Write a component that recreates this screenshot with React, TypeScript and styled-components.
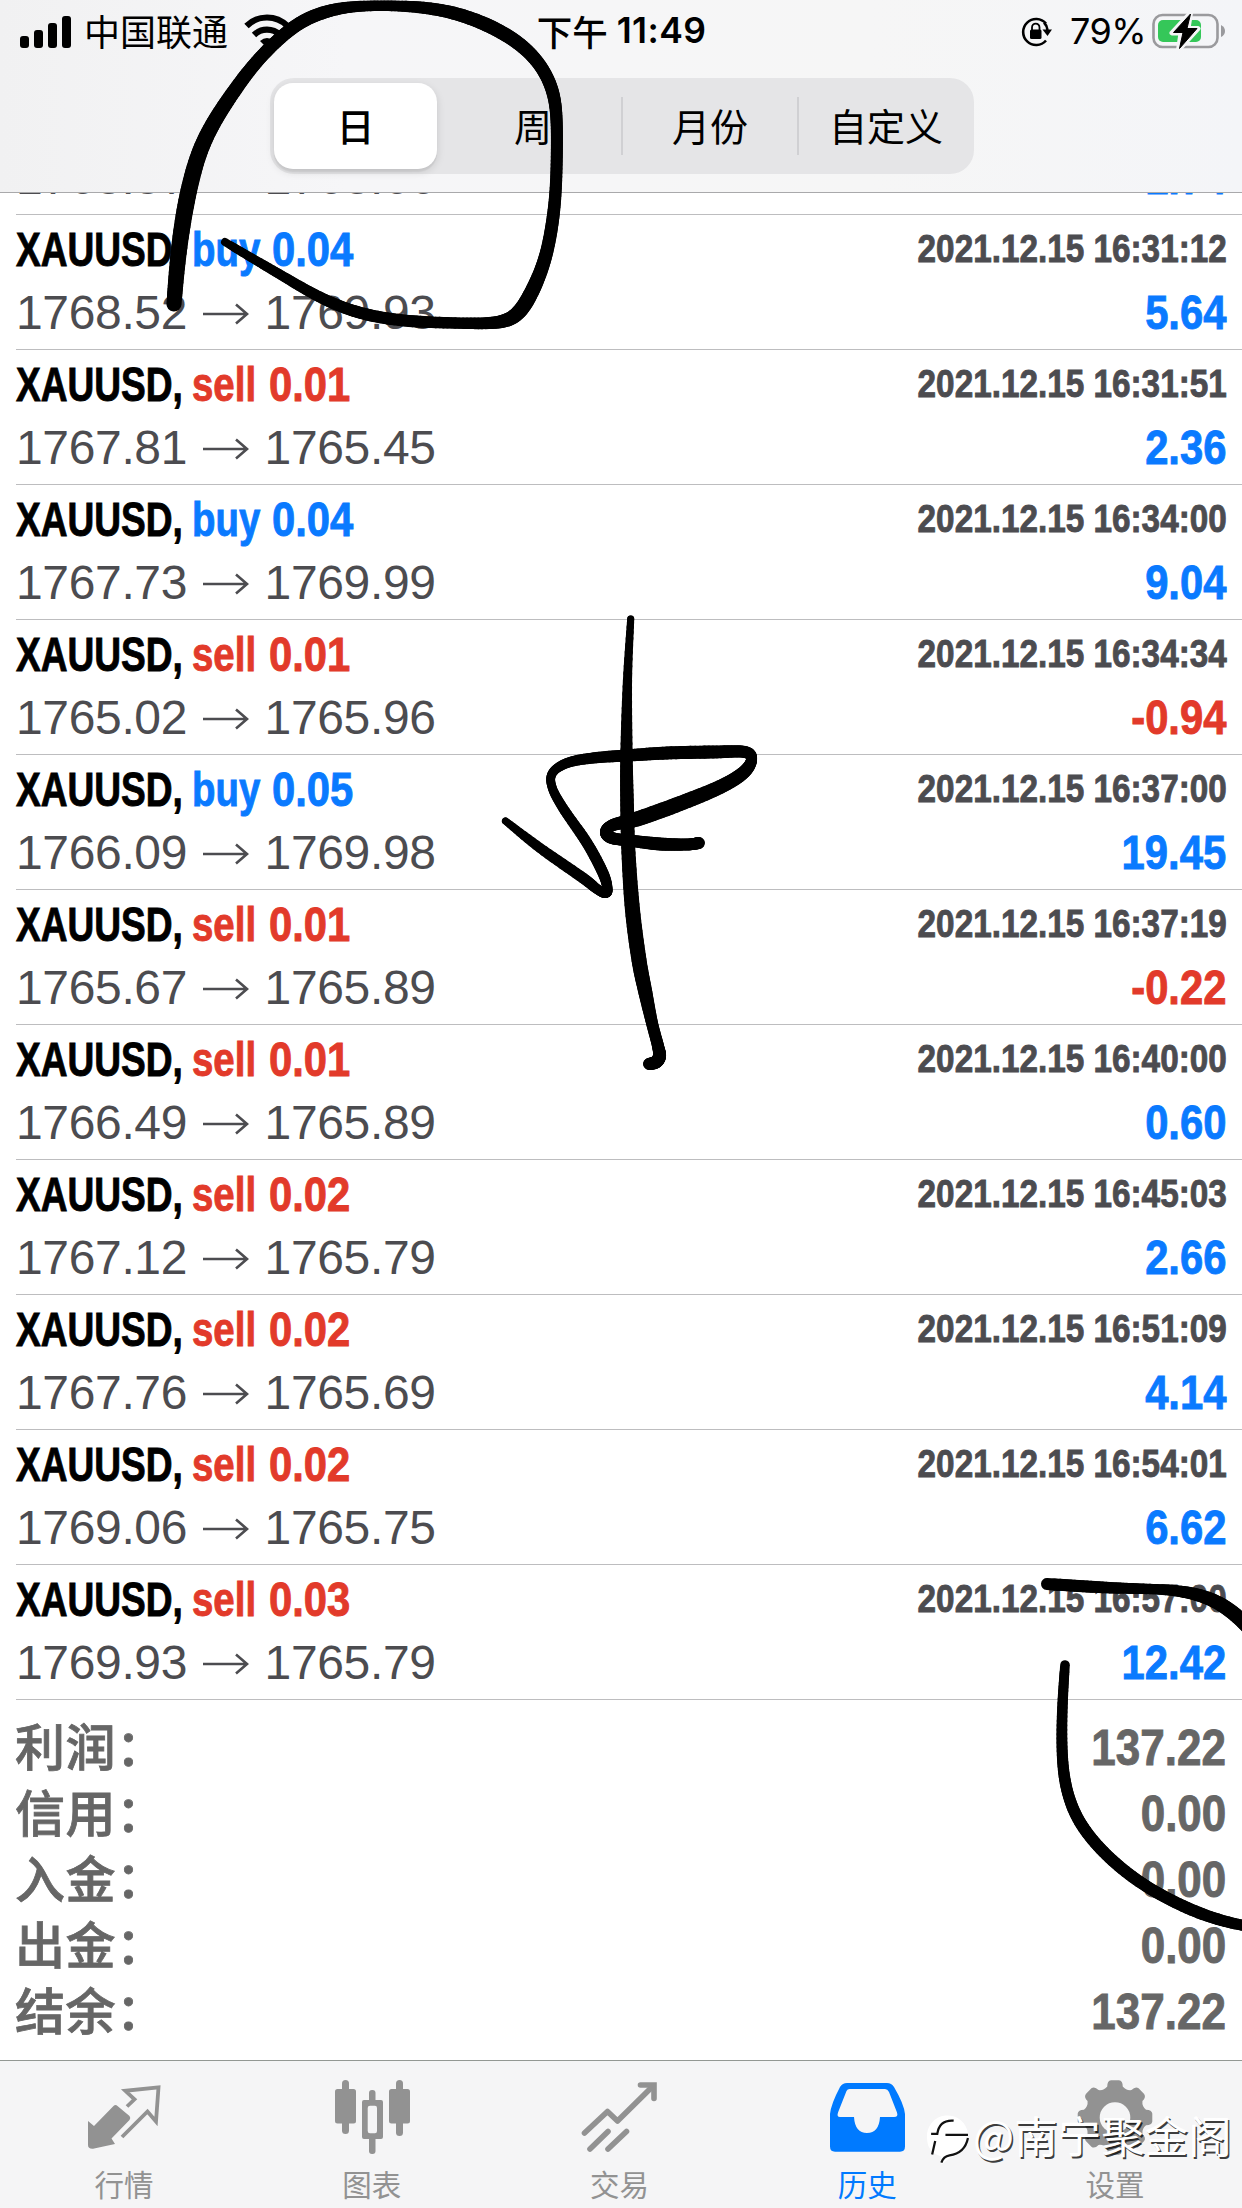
import React from 'react';
import styled, { createGlobalStyle } from 'styled-components';

const CJK = '"Noto Sans CJK SC", sans-serif';
const BLUE = '#0a7aff';
const RED = '#e23a2a';

const GlobalStyle = createGlobalStyle`
  * { box-sizing: border-box; }
  body { margin: 0; background: #fff; font-family: "Liberation Sans", ${CJK}; }
`;

const Screen = styled.div`
  position: relative;
  display: flex;
  flex-direction: column;
  width: 1242px;
  height: 2208px;
  overflow: hidden;
  background: #fff;
`;

const Header = styled.header`
  flex: none;
  height: 193px;
  border-bottom: 1px solid #a9a9ab;
  background: linear-gradient(90deg, #f1f1f2, #f6f6f8 28%, #f6f6f6 70%, #f4f5f8);
`;

const StatusBar = styled.div`
  display: grid;
  grid-template-columns: 1fr auto 1fr;
  align-items: center;
  height: 60px;
  padding: 2px 16px 0 20px;
  color: #000;
`;

const StatusGroup = styled.div<{ $end?: boolean }>`
  display: flex;
  align-items: center;
  justify-content: ${p => (p.$end ? 'flex-end' : 'flex-start')};
`;

const Carrier = styled.span`
  margin: 0 16px 0 12px;
  padding-bottom: 3px;
  font: 400 36px/57px ${CJK};
`;

const Clock = styled.div`
  display: flex;
  align-items: center;
  gap: 9px;
  margin-right: 3px;
  padding-bottom: 2px;
  font: 600 35.5px/58px Inter, sans-serif;
  letter-spacing: 0.4px;
`;

const Meridiem = styled.span`
  font: 500 35.5px/58px ${CJK};
  letter-spacing: 0;
`;

const Percent = styled.span`
  width: 75px;
  margin: 0 7px 0 17px;
  padding-bottom: 2px;
  font: 400 36px/58px Inter, sans-serif;
  letter-spacing: -0.6px;
  white-space: nowrap;
`;

const Segmented = styled.div`
  display: grid;
  grid-template-columns: repeat(4, 1fr);
  width: 704px;
  height: 96px;
  margin: 18px 0 0 270px;
  padding: 5px 0 6px;
  border-radius: 24px;
  background: #e5e5e7;
`;

const Segment = styled.div<{ $active?: boolean; $divided?: boolean }>`
  display: flex;
  align-items: center;
  justify-content: center;
  margin: ${p => (p.$active ? '0 9px 0 4px' : '14px 1px 14px -1px')};
  padding-bottom: 2px;
  border-left: ${p => (p.$divided ? '2px solid #d0d0d3' : '0')};
  border-radius: ${p => (p.$active ? '19px' : '0')};
  background: ${p => (p.$active ? '#fff' : 'transparent')};
  box-shadow: ${p => (p.$active ? '0 3px 8px rgba(0,0,0,.13), 0 3px 1px rgba(0,0,0,.05)' : 'none')};
  font: ${p => (p.$active ? 500 : 400)} 38px/56px ${CJK};
  color: #000;
`;

const Content = styled.main`
  flex: 1;
  min-height: 0;
  overflow: hidden;
`;

const Deals = styled.ul`
  margin: -113px 0 0;
  padding: 0 0 0 16px;
  list-style: none;
`;

const Deal = styled.li`
  display: flex;
  flex-direction: column;
  height: 135px;
  padding: 5px 15px 0 0;
  border-bottom: 1px solid #bdbdbf;
`;

const Line = styled.div`
  display: flex;
  justify-content: space-between;
  height: 63px;
`;

const Side = styled.div`
  display: flex;
`;

/* Reserves a fixed slot and narrows the bold face inside it. */
const Slot = styled.span<{ $w: number }>`
  display: block;
  width: ${p => p.$w}px;
  white-space: nowrap;
`;

const Narrow = styled.span<{ $x: number; $size: number; $color: string; $end?: boolean }>`
  display: block;
  width: max-content;
  margin-left: ${p => (p.$end ? 'auto' : '0')};
  transform: scaleX(${p => p.$x});
  transform-origin: ${p => (p.$end ? 'right' : 'left')} center;
  color: ${p => p.$color};
  -webkit-text-stroke: 0.9px ${p => p.$color};
  font: 700 ${p => p.$size}px/60px "Liberation Sans", sans-serif;
`;

const DateText = styled(Narrow)`
  line-height: 57px;
`;

const Profit = styled(Narrow)`
  margin-right: 1px;
`;

const Price = styled.div`
  display: flex;
  align-items: center;
  height: 60px;
  color: #4c4c50;
  font: 400 48px/60px "Liberation Sans", sans-serif;
  letter-spacing: -0.35px;
`;

const Arrow = styled.svg`
  width: 46px;
  height: 24px;
  margin: 1px 16px 0 15.5px;
`;

const Summary = styled.section`
  padding: 14px 16px 0 15px;
`;

const SummaryRow = styled.div`
  display: flex;
  justify-content: space-between;
  height: 66px;
  color: #666;
  font: 500 50px/61px ${CJK};
`;

const SummaryLabel = styled.span`
  letter-spacing: 0.5px;
  -webkit-text-stroke: 0.8px #666;
`;

const Colon = styled.span`
  margin-left: 0;
`;

const Total = styled(Narrow)`
  line-height: 69px;
`;

const TabBar = styled.nav`
  display: grid;
  grid-template-columns: repeat(5, 1fr);
  flex: none;
  height: 148px;
  padding-right: 3px;
  border-top: 1px solid #939893;
  background: #f5f5f6;
`;

const Tab = styled.div<{ $active?: boolean }>`
  display: flex;
  flex-direction: column;
  align-items: center;
  padding-top: 17px;
  color: ${p => (p.$active ? '#007aff' : '#929292')};
  font: 400 29.5px/40px ${CJK};
`;

const TabIcon = styled.svg`
  width: 78px;
  height: 78px;
  margin-bottom: 7px;
`;

const Watermark = styled.div`
  position: absolute;
  left: 926px;
  top: 2111px;
  display: flex;
  align-items: center;
  gap: 4px;
  color: #fff;
  font: 400 43.5px/54px ${CJK};
  text-shadow: 1.5px 1.5px 0.5px rgba(0, 0, 0, 0.75);
  white-space: nowrap;
`;

const WatermarkName = styled.span`
  padding-bottom: 6px;
  line-height: 48px;
`;

const Ink = styled.svg`
  position: absolute;
  inset: 0;
  width: 1242px;
  height: 2208px;
  pointer-events: none;
`;

type Point = [number, number, number];
type InkStroke = { soft?: boolean; points: Point[] };

const strokes: InkStroke[] = [
  { soft: true, points: [[174,304,15],[178,253,16],[186,200,17],[198,152,16],[215,119,15],[236,88,14],[254,64,13],[276,41,13],[299,22,13],[325,11,13],[353,6,11],[388,5.5,10],[424,7,12],[457,13,13],[489,25,14],[519,42,14],[541,64,13],[554,91,13],[557,118,12],[557,152,12],[556,193,12],[552,228,13],[545,262,13],[532,293,15],[517,318,15],[495,324,12],[455,323,11],[416,322,12],[380,318,12],[348,310,12],[316,296,11],[281,275,10],[250,257,9],[225,242,8]] },
  { points: [[630.7,619,7],[627.5,680,9],[626.5,750,12],[627,800,13.5],[628.5,853,14],[632.5,910,15],[639,960,15],[645.5,993,14],[652,1023,12],[658,1046,12],[659.5,1056,13],[656,1062,13],[649,1064,12]] },
  { points: [[505.5,821,7],[540,848,10],[583,878,11],[597,889,10],[605,893,10],[607.5,889,10],[603,873,11],[587,843,11],[563,808,10],[552,787,9],[552.5,773,9],[567,763,10],[593,758,11],[627,755.5,12],[667,753,13],[713,752,13],[745,752,12],[751.5,760,11],[743,773,13],[720,787,14],[680,803.5,15],[637,819,15],[613,825,12],[606,832,12],[612,838,12],[633,841,12],[660,844,13],[687,844.5,12],[699,843,12]] },
  { soft: true, points: [[1047,1584,12],[1093,1587,12],[1127,1588.5,11],[1160,1589,10],[1190,1592,12],[1218,1601,14],[1243,1620,15],[1266,1648,14]] },
  { soft: true, points: [[1065,1665,9.5],[1062,1707,10.5],[1061.5,1753,11],[1065,1787,11.5],[1076,1819,12],[1099,1849,12],[1132,1878,12],[1167,1899,12],[1207,1917,12],[1243,1926,11],[1270,1929,11]] },
];

const catmullRom = (a: number, b: number, c: number, d: number, t: number) =>
  0.5 * (2 * b + (c - a) * t + (2 * a - 5 * b + 4 * c - d) * t * t + (3 * b - a - 3 * c + d) * t * t * t);

const bSpline = (a: number, b: number, c: number, d: number, t: number) =>
  ((1 - t) ** 3 * a + (3 * t ** 3 - 6 * t * t + 4) * b + (-3 * t ** 3 + 3 * t * t + 3 * t + 1) * c + t ** 3 * d) / 6;

function Stroke({ points, soft }: InkStroke) {
  const at = (i: number) => points[Math.max(0, Math.min(points.length - 1, i))];
  const curve = soft ? bSpline : catmullRom;
  const samples: Point[] = [at(0)];
  for (let i = 0; i < points.length - 1; i++) {
    for (let s = 0; s < 10; s++) {
      samples.push([0, 1, 2].map(k =>
        curve(at(i - 1)[k], at(i)[k], at(i + 1)[k], at(i + 2)[k], s / 10)) as Point);
    }
  }
  samples.push(at(points.length - 1));
  return (
    <g stroke="#000" strokeLinecap="round">
      {samples.slice(1).map((p, i) => (
        <line key={i} x1={samples[i][0]} y1={samples[i][1]} x2={p[0]} y2={p[1]} strokeWidth={p[2]} />
      ))}
    </g>
  );
}

type DealData = { side: 'buy' | 'sell'; volume: string; open: string; close: string; time: string; profit: string };

const d = (side: 'buy' | 'sell', volume: string, open: string, close: string, time: string, profit: string): DealData =>
  ({ side, volume, open, close, time: '2021.12.15 ' + time, profit });

const deals: DealData[] = [
  d('sell', '0.01', '1768.37', '1768.66', '16:30:00', '1.74'),
  d('buy', '0.04', '1768.52', '1769.93', '16:31:12', '5.64'),
  d('sell', '0.01', '1767.81', '1765.45', '16:31:51', '2.36'),
  d('buy', '0.04', '1767.73', '1769.99', '16:34:00', '9.04'),
  d('sell', '0.01', '1765.02', '1765.96', '16:34:34', '-0.94'),
  d('buy', '0.05', '1766.09', '1769.98', '16:37:00', '19.45'),
  d('sell', '0.01', '1765.67', '1765.89', '16:37:19', '-0.22'),
  d('sell', '0.01', '1766.49', '1765.89', '16:40:00', '0.60'),
  d('sell', '0.02', '1767.12', '1765.79', '16:45:03', '2.66'),
  d('sell', '0.02', '1767.76', '1765.69', '16:51:09', '4.14'),
  d('sell', '0.02', '1769.06', '1765.75', '16:54:01', '6.62'),
  d('sell', '0.03', '1769.93', '1765.79', '16:57:00', '12.42'),
];

const totals = [['利润', '137.22'], ['信用', '0.00'], ['入金', '0.00'], ['出金', '0.00'], ['结余', '137.22']];

function DealRow({ deal }: { deal: DealData }) {
  const color = deal.side === 'buy' ? BLUE : RED;
  return (
    <Deal>
      <Line>
        <Side>
          <Slot $w={176}><Narrow $x={0.772} $size={48} $color="#000">XAUUSD,</Narrow></Slot>
          <Slot $w={deal.side === 'buy' ? 80 : 77}><Narrow $x={0.8} $size={48} $color={color}>{deal.side}</Narrow></Slot>
          <Slot $w={90}><Narrow $x={0.87} $size={48} $color={color}>{deal.volume}</Narrow></Slot>
        </Side>
        <DateText $end $x={0.843} $size={39.5} $color="#4c4c50">{deal.time}</DateText>
      </Line>
      <Line>
        <Price>
          {deal.open}
          <Arrow viewBox="0 0 46 24" fill="none" stroke="currentColor" strokeWidth="2.6">
            <path d="M0 12H44M33 2.5L44 12L33 21.5" />
          </Arrow>
          {deal.close}
        </Price>
        <Profit $end $x={0.87} $size={48} $color={deal.profit.startsWith('-') ? RED : BLUE}>{deal.profit}</Profit>
      </Line>
    </Deal>
  );
}

const gearPath = Array.from({ length: 8 }, (_, i) => {
  const pt = (deg: number, r: number) => {
    const a = ((i * 45 + deg - 90) * Math.PI) / 180;
    return `${(39 + r * Math.cos(a)).toFixed(2)} ${(39.5 + r * Math.sin(a)).toFixed(2)}`;
  };
  return `${i ? 'L' : 'M'}${pt(-14, 32)}Q${pt(-12, 37.5)} ${pt(-6, 37.5)}L${pt(6, 37.5)}Q${pt(12, 37.5)} ${pt(14, 32)}Q${pt(22.5, 29)} ${pt(31, 32)}`;
}).join('') + 'Z';

export default function App() {
  return (
    <>
      <GlobalStyle />
      <Screen>
        <Header>
          <StatusBar>
            <StatusGroup>
              <svg width="52" height="34" viewBox="0 0 52 34">
                <rect x="0" y="21" width="9" height="12" rx="3" />
                <rect x="14" y="15" width="9" height="18" rx="3" />
                <rect x="28" y="8" width="9" height="25" rx="3" />
                <rect x="42" y="1" width="9" height="32" rx="3" />
              </svg>
              <Carrier>中国联通</Carrier>
              <svg width="46" height="36" viewBox="0 0 46 36" fill="none" stroke="#000" strokeWidth="6.2">
                <path d="M2.5 12A29 29 0 0 1 43.5 12" />
                <path d="M10 21A18.5 18.5 0 0 1 36 21" />
                <path d="M16 27Q23 21 30 27L23 34Z" fill="#000" stroke="none" />
              </svg>
            </StatusGroup>
            <Clock><Meridiem>下午</Meridiem>11:49</Clock>
            <StatusGroup $end>
              <svg width="33" height="32" viewBox="0 0 33 32">
                <path d="M26 7.5A13 13 0 1 0 26 24.5" fill="none" stroke="#000" strokeWidth="2.6" />
                <path d="M22.5 13.5H32L27.5 20Z" />
                <path d="M27.5 14Q27 9.5 24 6.5" fill="none" stroke="#000" strokeWidth="2.6" />
                <rect x="10" y="13.5" width="11.5" height="9.5" rx="1.5" />
                <path d="M12 14V11.5A3.5 3.7 0 0 1 19.5 11.5V14" fill="none" stroke="#000" strokeWidth="1.8" />
              </svg>
              <Percent>79%</Percent>
              <svg width="74" height="38" viewBox="0 0 74 38">
                <rect x="1.5" y="2" width="64" height="32" rx="9" fill="none" stroke="#9a9a9d" strokeWidth="2.6" />
                <path d="M69 12Q73 14 73 18Q73 22 69 24Z" fill="#9a9a9d" />
                <rect x="6" y="7" width="43" height="22" rx="5" fill="#35c759" />
                <path d="M38.5 0L20 20H29L26.5 37L46 15.5H36Z" stroke="#f5f5f7" strokeWidth="5" strokeLinejoin="round" />
                <path d="M38.5 1L21.5 19.5H31L27.5 35.5L45 15.5H35Z" stroke="#000" strokeWidth="1" strokeLinejoin="round" />
              </svg>
            </StatusGroup>
          </StatusBar>
          <Segmented>
            <Segment $active>日</Segment>
            <Segment>周</Segment>
            <Segment $divided>月份</Segment>
            <Segment $divided>自定义</Segment>
          </Segmented>
        </Header>

        <Content>
          <Deals>{deals.map(deal => <DealRow key={deal.time} deal={deal} />)}</Deals>
          <Summary>
            {totals.map(([label, value]) => (
              <SummaryRow key={label}>
                <SummaryLabel>{label}<Colon>：</Colon></SummaryLabel>
                <Total $end $x={0.88} $size={50} $color="#666">{value}</Total>
              </SummaryRow>
            ))}
          </Summary>
        </Content>

        <TabBar>
          <Tab>
            <TabIcon viewBox="0 0 78 78">
              <path d="M3 43L9 48L28.5 28Q30.5 26 32.5 28L44.5 38Q46 40 44.5 42L26.5 60.5L30 66L8 70.7Q3 71 3 67Z" fill="currentColor" />
              <path d="M42 28.5L49.5 21.3L40.3 12.8L73.5 9.3L71 43.5L62.5 33.5L37 59" fill="none" stroke="currentColor" strokeWidth="3.8" />
            </TabIcon>
            行情
          </Tab>
          <Tab>
            <TabIcon viewBox="0 0 78 78" fill="currentColor">
              <rect x="2" y="11" width="21" height="34.5" rx="2.5" /><rect x="9" y="2" width="7" height="54" rx="3.5" />
              <rect x="36" y="12" width="6.5" height="14" rx="3" /><rect x="36" y="58" width="6.5" height="18" rx="3" />
              <path fillRule="evenodd" d="M31 22H48Q50 22 50 24V59Q50 61 48 61H31Q29 61 29 59V24Q29 22 31 22ZM37 27.7Q34.7 27.7 34.7 30V53Q34.7 55.3 37 55.3H42Q44 55.3 44 53V30Q44 27.7 42 27.7Z" />
              <rect x="56" y="11" width="21" height="34.5" rx="2.5" /><rect x="63" y="2" width="7" height="56" rx="3.5" />
            </TabIcon>
            图表
          </Tab>
          <Tab>
            <TabIcon viewBox="0 0 78 78" fill="none" stroke="currentColor" strokeWidth="5.6" strokeLinecap="round">
              <path d="M4.5 55L27.5 33.5L37.5 43L72 9" strokeLinejoin="round" />
              <path d="M60.5 7H74V20.5" />
              <path d="M10 71L28 53.5M28 71L46.5 53.5" />
            </TabIcon>
            交易
          </Tab>
          <Tab $active>
            <TabIcon viewBox="0 0 78 78" fill="currentColor">
              <path fillRule="evenodd" d="M19 5H59Q63.5 5 66 9Q76 26 77 36V68.5Q77 73.7 72 73.7H7Q2 73.7 2 68.5V36Q3 26 12 9Q14.5 5 19 5ZM21.5 11Q19.5 11 18.5 13L10 34.5Q8.5 39 12 39H26Q27 55 39 55Q51 55 52 39H66Q70.5 39 69 34.5L61 14Q59.5 11 57 11Z" />
            </TabIcon>
            历史
          </Tab>
          <Tab>
            <TabIcon viewBox="0 0 78 78">
              <path d={gearPath} fill="currentColor" />
              <circle cx="39" cy="39.5" r="15.3" fill="#f5f5f6" />
            </TabIcon>
            设置
          </Tab>
        </TabBar>

        <Watermark>
          <svg width="43" height="54" viewBox="0 0 42 52">
            <path d="M1 26A20 20 0 0 1 41 22Q42 39 24 45L15 52V44Q1 40 1 26Z" fill="#fff" />
            <path d="M27 9Q13 8 11 22H5M19 23H41M9 29L6 42M41 26Q38 41 23 43Q17 44 15 50" fill="none" stroke="#111" strokeWidth="2.2" />
          </svg>
          <WatermarkName>@南宁聚金阁</WatermarkName>
        </Watermark>

        <Ink viewBox="0 0 1242 2208">
          {strokes.map((stroke, i) => <Stroke key={i} {...stroke} />)}
        </Ink>
      </Screen>
    </>
  );
}
